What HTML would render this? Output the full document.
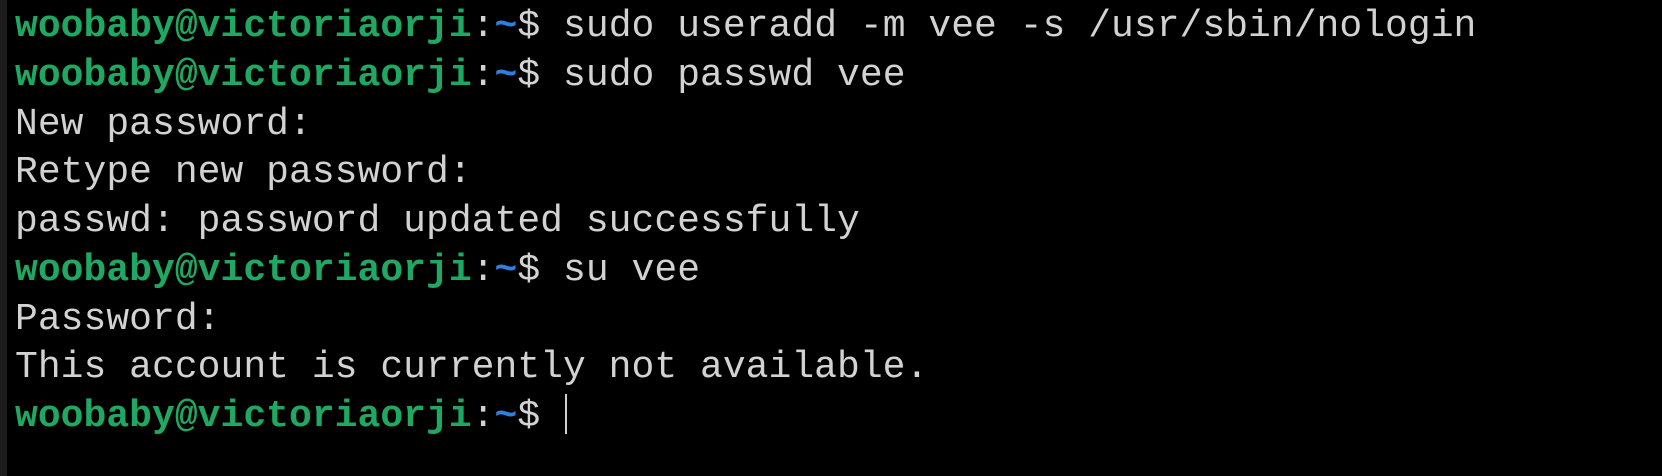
<!DOCTYPE html>
<html><head><meta charset="utf-8"><style>
html,body{margin:0;padding:0;background:#000;width:1662px;height:476px;overflow:hidden}
.strip{position:absolute;left:0;top:0;width:7px;height:476px;background:#1c1c1c}
pre{position:absolute;left:15px;top:3px;margin:0;font-family:"Liberation Mono",monospace;font-size:38px;line-height:48.75px;color:#d2d2d2;letter-spacing:0.03px}
.g{color:#1fa862;font-weight:bold}
.b{color:#2f7fe0;font-weight:bold}
.c{display:inline-block;width:2px;height:40px;background:#cfcfcf;vertical-align:-8px;margin-left:2px}
</style></head><body>
<div class="strip"></div>
<pre><span class="g">woobaby@victoriaorji</span>:<span class="b">~</span>$ sudo useradd -m vee -s /usr/sbin/nologin
<span class="g">woobaby@victoriaorji</span>:<span class="b">~</span>$ sudo passwd vee
New password:
Retype new password:
passwd: password updated successfully
<span class="g">woobaby@victoriaorji</span>:<span class="b">~</span>$ su vee
Password:
This account is currently not available.
<span class="g">woobaby@victoriaorji</span>:<span class="b">~</span>$ <span class="c"></span></pre>
</body></html>
